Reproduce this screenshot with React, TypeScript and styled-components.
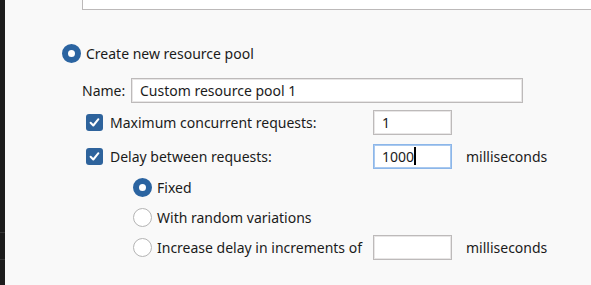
import React from "react";
import styled, { createGlobalStyle } from "styled-components";

const Global = createGlobalStyle`
  html, body { margin: 0; padding: 0; background: #f9f9f9; }
  body { font-family: "Noto Sans", "Open Sans", sans-serif; font-size: 14px; color: #1b1b1b; }
`;

const Page = styled.div`
  display: flex;
  width: 591px;
  height: 285px;
  overflow: hidden;
  background: #f9f9f9;
`;

const SideStrip = styled.div`
  width: 5px;
  flex: none;
  display: flex;
  flex-direction: column;
  background: #1c1c1c;
`;

const StripSeg = styled.div<{ $h: number }>`
  height: ${(p) => p.$h}px;
  flex: none;
  border-bottom: 1px solid #363636;
`;

const Main = styled.div`
  flex: 1;
  display: flex;
  flex-direction: column;
  min-width: 0;
`;

const TopBox = styled.div`
  margin-left: 77px;
  margin-right: -4px;
  height: 9px;
  background: #ffffff;
  border: 1px solid #bcb9b9;
  border-top: none;
`;

const Row = styled.div<{ $mt: number; $indent: number; $h?: number }>`
  display: flex;
  align-items: center;
  margin-top: ${(p) => p.$mt}px;
  padding-left: ${(p) => p.$indent}px;
  height: ${(p) => p.$h ?? 20}px;
  white-space: nowrap;
`;

const Radio = styled.span<{ $on?: boolean }>`
  box-sizing: border-box;
  width: 19px;
  height: 19px;
  flex: none;
  border-radius: 50%;
  background: #ffffff;
  border: ${(p) => (p.$on ? "6px solid #2b64a1" : "1.5px solid #b4b4b4")};
`;

const Check = styled.span`
  box-sizing: border-box;
  width: 17px;
  height: 17px;
  flex: none;
  border-radius: 3px;
  background: #2e639c;
  display: flex;
  align-items: center;
  justify-content: center;
`;

const Label = styled.span<{ $gap: number; $w?: number }>`
  margin-left: ${(p) => p.$gap}px;
  ${(p) => (p.$w ? `width: ${p.$w}px; flex: none;` : "")}
`;

const PlainLabel = styled.span<{ $w: number }>`
  width: ${(p) => p.$w}px;
  flex: none;
`;

const TextBox = styled.div<{ $w: number; $focus?: boolean }>`
  box-sizing: border-box;
  width: ${(p) => p.$w}px;
  height: 25px;
  flex: none;
  display: flex;
  align-items: center;
  padding-left: 8px;
  background: #ffffff;
  border: 1px solid ${(p) => (p.$focus ? "#8cb6e9" : "#bdbaba")};
  box-shadow: inset 0 0 0 1px ${(p) => (p.$focus ? "#a9c9ef" : "#e8e6e6")};
  color: #1b1b1b;
`;

const Caret = styled.span`
  display: inline-block;
  width: 2px;
  height: 18px;
  background: #000;
`;

const Unit = styled.span`
  margin-left: 14px;
`;

const CheckMark = () => (
  <svg width="13" height="13" viewBox="0 0 13 13">
    <path d="M2.6 6.8 L5.3 9.5 L10.4 3.2" fill="none" stroke="#fff" strokeWidth="2" strokeLinecap="round" strokeLinejoin="round" />
  </svg>
);

export default function App() {
  return (
    <>
      <Global />
      <Page>
        <SideStrip>
          <StripSeg $h={232} />
          <StripSeg $h={26} />
        </SideStrip>
        <Main>
          <TopBox />
          <Row $mt={33} $indent={57}>
            <Radio $on />
            <Label $gap={5}>Create new resource pool</Label>
          </Row>
          <Row $mt={15} $indent={77} $h={25}>
            <PlainLabel $w={49}>Name:</PlainLabel>
            <TextBox $w={392}>Custom resource pool 1</TextBox>
          </Row>
          <Row $mt={7} $indent={81} $h={25}>
            <Check>
              <CheckMark />
            </Check>
            <Label $gap={7} $w={263}>Maximum concurrent requests:</Label>
            <TextBox $w={79}>1</TextBox>
          </Row>
          <Row $mt={8} $indent={81} $h={26}>
            <Check>
              <CheckMark />
            </Check>
            <Label $gap={7} $w={263}>Delay between requests:</Label>
            <TextBox $w={79} $focus>
              1000
              <Caret />
            </TextBox>
            <Unit>milliseconds</Unit>
          </Row>
          <Row $mt={8} $indent={128}>
            <Radio $on />
            <Label $gap={5}>Fixed</Label>
          </Row>
          <Row $mt={10} $indent={128}>
            <Radio />
            <Label $gap={5}>With random variations</Label>
          </Row>
          <Row $mt={8} $indent={128} $h={25}>
            <Radio />
            <Label $gap={5} $w={216}>Increase delay in increments of</Label>
            <TextBox $w={79} />
            <Unit>milliseconds</Unit>
          </Row>
        </Main>
      </Page>
    </>
  );
}
